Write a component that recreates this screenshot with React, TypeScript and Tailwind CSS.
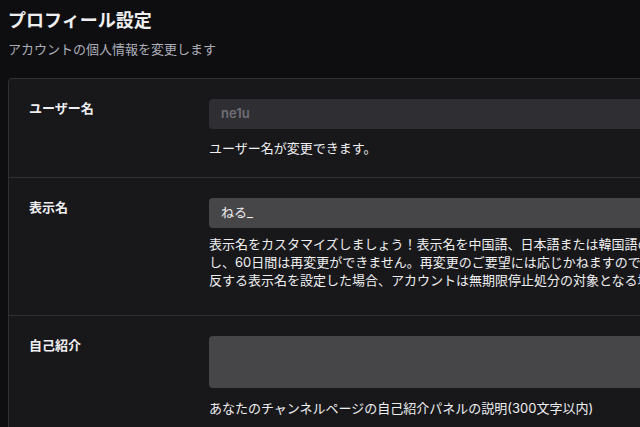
export default function App() {
  const font = { fontFamily: '"Inter", "Noto Sans CJK JP", sans-serif' }
  return (
    <div className="h-[427px] w-[640px] overflow-hidden bg-[#0e0e10] text-[#efeff1]" style={font}>
      <div className="px-2 pt-[7px]">
        <h1 className="text-[18px] font-bold leading-[28px]">プロフィール設定</h1>
        <p className="mt-[5px] text-[13px] leading-[18px] text-[#adadb8]">アカウントの個人情報を変更します</p>
      </div>
      <div className="ml-2 mt-[20px] w-[900px] rounded-[4px] border border-[#2f2f35] bg-[#18181b]">
        <div className="flex border-b border-[#2f2f35] pb-[20px] pt-[20px]">
          <div className="w-[200px] shrink-0 pl-[20px] text-[13px] font-bold leading-[18px]">ユーザー名</div>
          <div className="flex-1">
            <div className="flex h-[30px] items-center rounded-[4px] bg-[#2f2f33] px-[12px] text-[13px] font-semibold text-[#6e6e74]">ne1u</div>
            <p className="mt-[10px] text-[13px] leading-[18px]">ユーザー名が変更できます。</p>
          </div>
        </div>
        <div className="flex border-b border-[#2f2f35] pb-[26px] pt-[20px]">
          <div className="w-[200px] shrink-0 pl-[20px] text-[13px] font-bold leading-[18px]">表示名</div>
          <div className="flex-1">
            <div className="flex h-[30px] items-center rounded-[4px] bg-[#464649] px-[12px] text-[13px]">ねる_</div>
            <div className="mt-[7px] whitespace-nowrap text-[13px] leading-[18px]">
              <p>表示名をカスタマイズしましょう！表示名を中国語、日本語または韓国語の文字に変更する場合は、</p>
              <p>し、60日間は再変更ができません。再変更のご要望には応じかねますのでご注意ください。</p>
              <p>反する表示名を設定した場合、アカウントは無期限停止処分の対象となる場合があります。</p>
            </div>
          </div>
        </div>
        <div className="flex pb-[20px] pt-[20px]">
          <div className="w-[200px] shrink-0 pl-[20px] text-[13px] font-bold leading-[18px]">自己紹介</div>
          <div className="flex-1">
            <div className="h-[52px] rounded-[4px] bg-[#464649]" />
            <p className="mt-[11px] text-[13px] leading-[18px]">あなたのチャンネルページの自己紹介パネルの説明(300文字以内)</p>
          </div>
        </div>
      </div>
    </div>
  )
}
